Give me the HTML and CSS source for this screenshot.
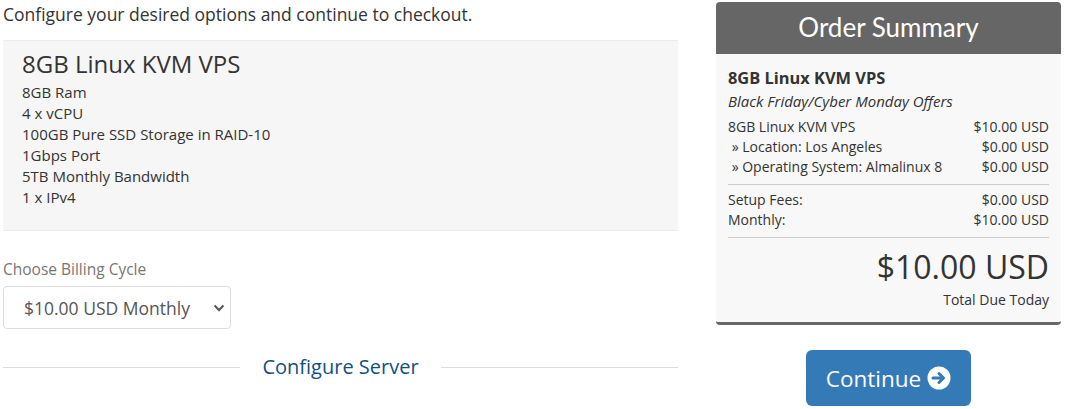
FILE: index.html
```html
<!DOCTYPE html>
<html>
<head>
<meta charset="utf-8">
<link rel="stylesheet" href="styles.css">
</head>
<body>
<div class="page">
  <div class="main">
    <p class="intro">Configure your desired options and continue to checkout.</p>
    <div class="product">
      <h2 class="product-title">8GB Linux KVM VPS</h2>
      <div class="features">
        <div>8GB Ram</div>
        <div>4 x vCPU</div>
        <div>100GB Pure SSD Storage in RAID-10</div>
        <div>1Gbps Port</div>
        <div>5TB Monthly Bandwidth</div>
        <div>1 x IPv4</div>
      </div>
    </div>
    <label class="field-label">Choose Billing Cycle</label>
    <div class="select">
      <span>$10.00 USD Monthly</span>
      <svg class="chev" width="12" height="8" viewBox="0 0 12 8"><path d="M1.5 1.5 L6 6 L10.5 1.5" fill="none" stroke="#555" stroke-width="2"/></svg>
    </div>
    <div class="sub-heading">
      <span class="rule"></span>
      <span class="sub-text">Configure Server</span>
      <span class="rule"></span>
    </div>
  </div>
  <div class="side">
    <div class="summary">
      <div class="summary-head">Order Summary</div>
      <div class="summary-body">
        <div class="s-name">8GB Linux KVM VPS</div>
        <div class="s-group">Black Friday/Cyber Monday Offers</div>
        <div class="s-rows">
          <div class="s-row"><span>8GB Linux KVM VPS</span><span>$10.00 USD</span></div>
          <div class="s-row"><span>&nbsp;» Location: Los Angeles</span><span>$0.00 USD</span></div>
          <div class="s-row"><span>&nbsp;» Operating System: Almalinux 8</span><span>$0.00 USD</span></div>
        </div>
        <div class="s-sep"></div>
        <div class="s-row"><span>Setup Fees:</span><span>$0.00 USD</span></div>
        <div class="s-row"><span>Monthly:</span><span>$10.00 USD</span></div>
        <div class="s-sep s-sep2"></div>
        <div class="total">$10.00 USD</div>
        <div class="total-label">Total Due Today</div>
      </div>
    </div>
    <div class="btn-wrap">
      <button class="btn">Continue <svg width="24" height="24" viewBox="0 0 24 24"><circle cx="12" cy="12" r="11.5" fill="#fff"/><path d="M6 12 H16 M12 7.5 L16.5 12 L12 16.5" fill="none" stroke="#337ab7" stroke-width="3" stroke-linecap="round" stroke-linejoin="round"/></svg></button>
    </div>
  </div>
</div>
</body>
</html>
```

FILE: styles.css
```css
* { box-sizing: border-box; }
html, body { margin: 0; padding: 0; background: #fff; }
body { font-family: "Open Sans", "Liberation Sans", sans-serif; color: #333; }

.page {
  display: flex;
  padding-left: 3px;
  gap: 38px;
  width: 1066px;
}
.main { width: 675px; }
.side { width: 345px; padding-top: 2px; }

.intro {
  margin: 0;
  padding-top: 3px;
  font-size: 17.5px;
  line-height: 22px;
}

.product {
  margin-top: 15px;
  background: #f6f6f6;
  border-top: 1px solid #ececec;
  border-bottom: 1px solid #ececec;
  padding: 10px 19px 22px;
}
.product-title {
  margin: 0 0 5px;
  font-size: 24px;
  font-weight: 400;
  line-height: 26px;
}
.features { font-size: 15px; line-height: 21px; }

.field-label {
  display: block;
  margin-top: 28px;
  font-size: 15.5px;
  line-height: 21px;
  color: #7a7572;
}
.select {
  margin-top: 6px;
  width: 228px;
  height: 43px;
  border: 1px solid #ddd;
  border-radius: 4px;
  background: #fff;
  display: flex;
  align-items: center;
  justify-content: space-between;
  padding: 0 5px 0 20px;
  font-size: 17.5px;
  color: #555;
}

.sub-heading {
  margin-top: 24px;
  display: flex;
  align-items: center;
  gap: 22px;
}
.rule { flex: 1; height: 1px; background: #ddd; }
.sub-text {
  font-size: 20px;
  line-height: 28px;
  color: #11507f;
}

.summary {
  border-radius: 4px;
  overflow: hidden;
  border-bottom: 3px solid #666;
  background: #f8f8f8;
}
.summary-head {
  height: 52px;
  background: #666;
  color: #fff;
  font-family: "Lato", "Open Sans", sans-serif;
  font-size: 26px;
  line-height: 50px;
  text-align: center;
}
.summary-body {
  padding: 13px 12px 12px;
  font-size: 14px;
  line-height: 20px;
}
.s-name { font-size: 16.4px; font-weight: 700; line-height: 22px; }
.s-group { font-size: 15px; font-style: italic; line-height: 20px; margin-top: 2px; }
.s-rows { margin-top: 6px; }
.s-row { display: flex; justify-content: space-between; }
.s-sep { height: 1px; background: #ccc; margin: 7px 0 5px; }
.s-sep2 { margin: 7px 0 9px; }
.total { text-align: right; font-size: 32px; line-height: 40px; }
.total-label { text-align: right; margin-top: 3px; }

.btn-wrap { display: flex; justify-content: center; margin-top: 25px; }
.btn {
  width: 165px;
  height: 56px;
  border: none;
  border-radius: 6px;
  background: #337ab7;
  color: #fff;
  font-family: "Open Sans", "Liberation Sans", sans-serif;
  font-size: 22.5px;
  display: flex;
  align-items: center;
  justify-content: center;
  gap: 6px;
  padding: 0;
}
.btn svg { display: block; }
```
